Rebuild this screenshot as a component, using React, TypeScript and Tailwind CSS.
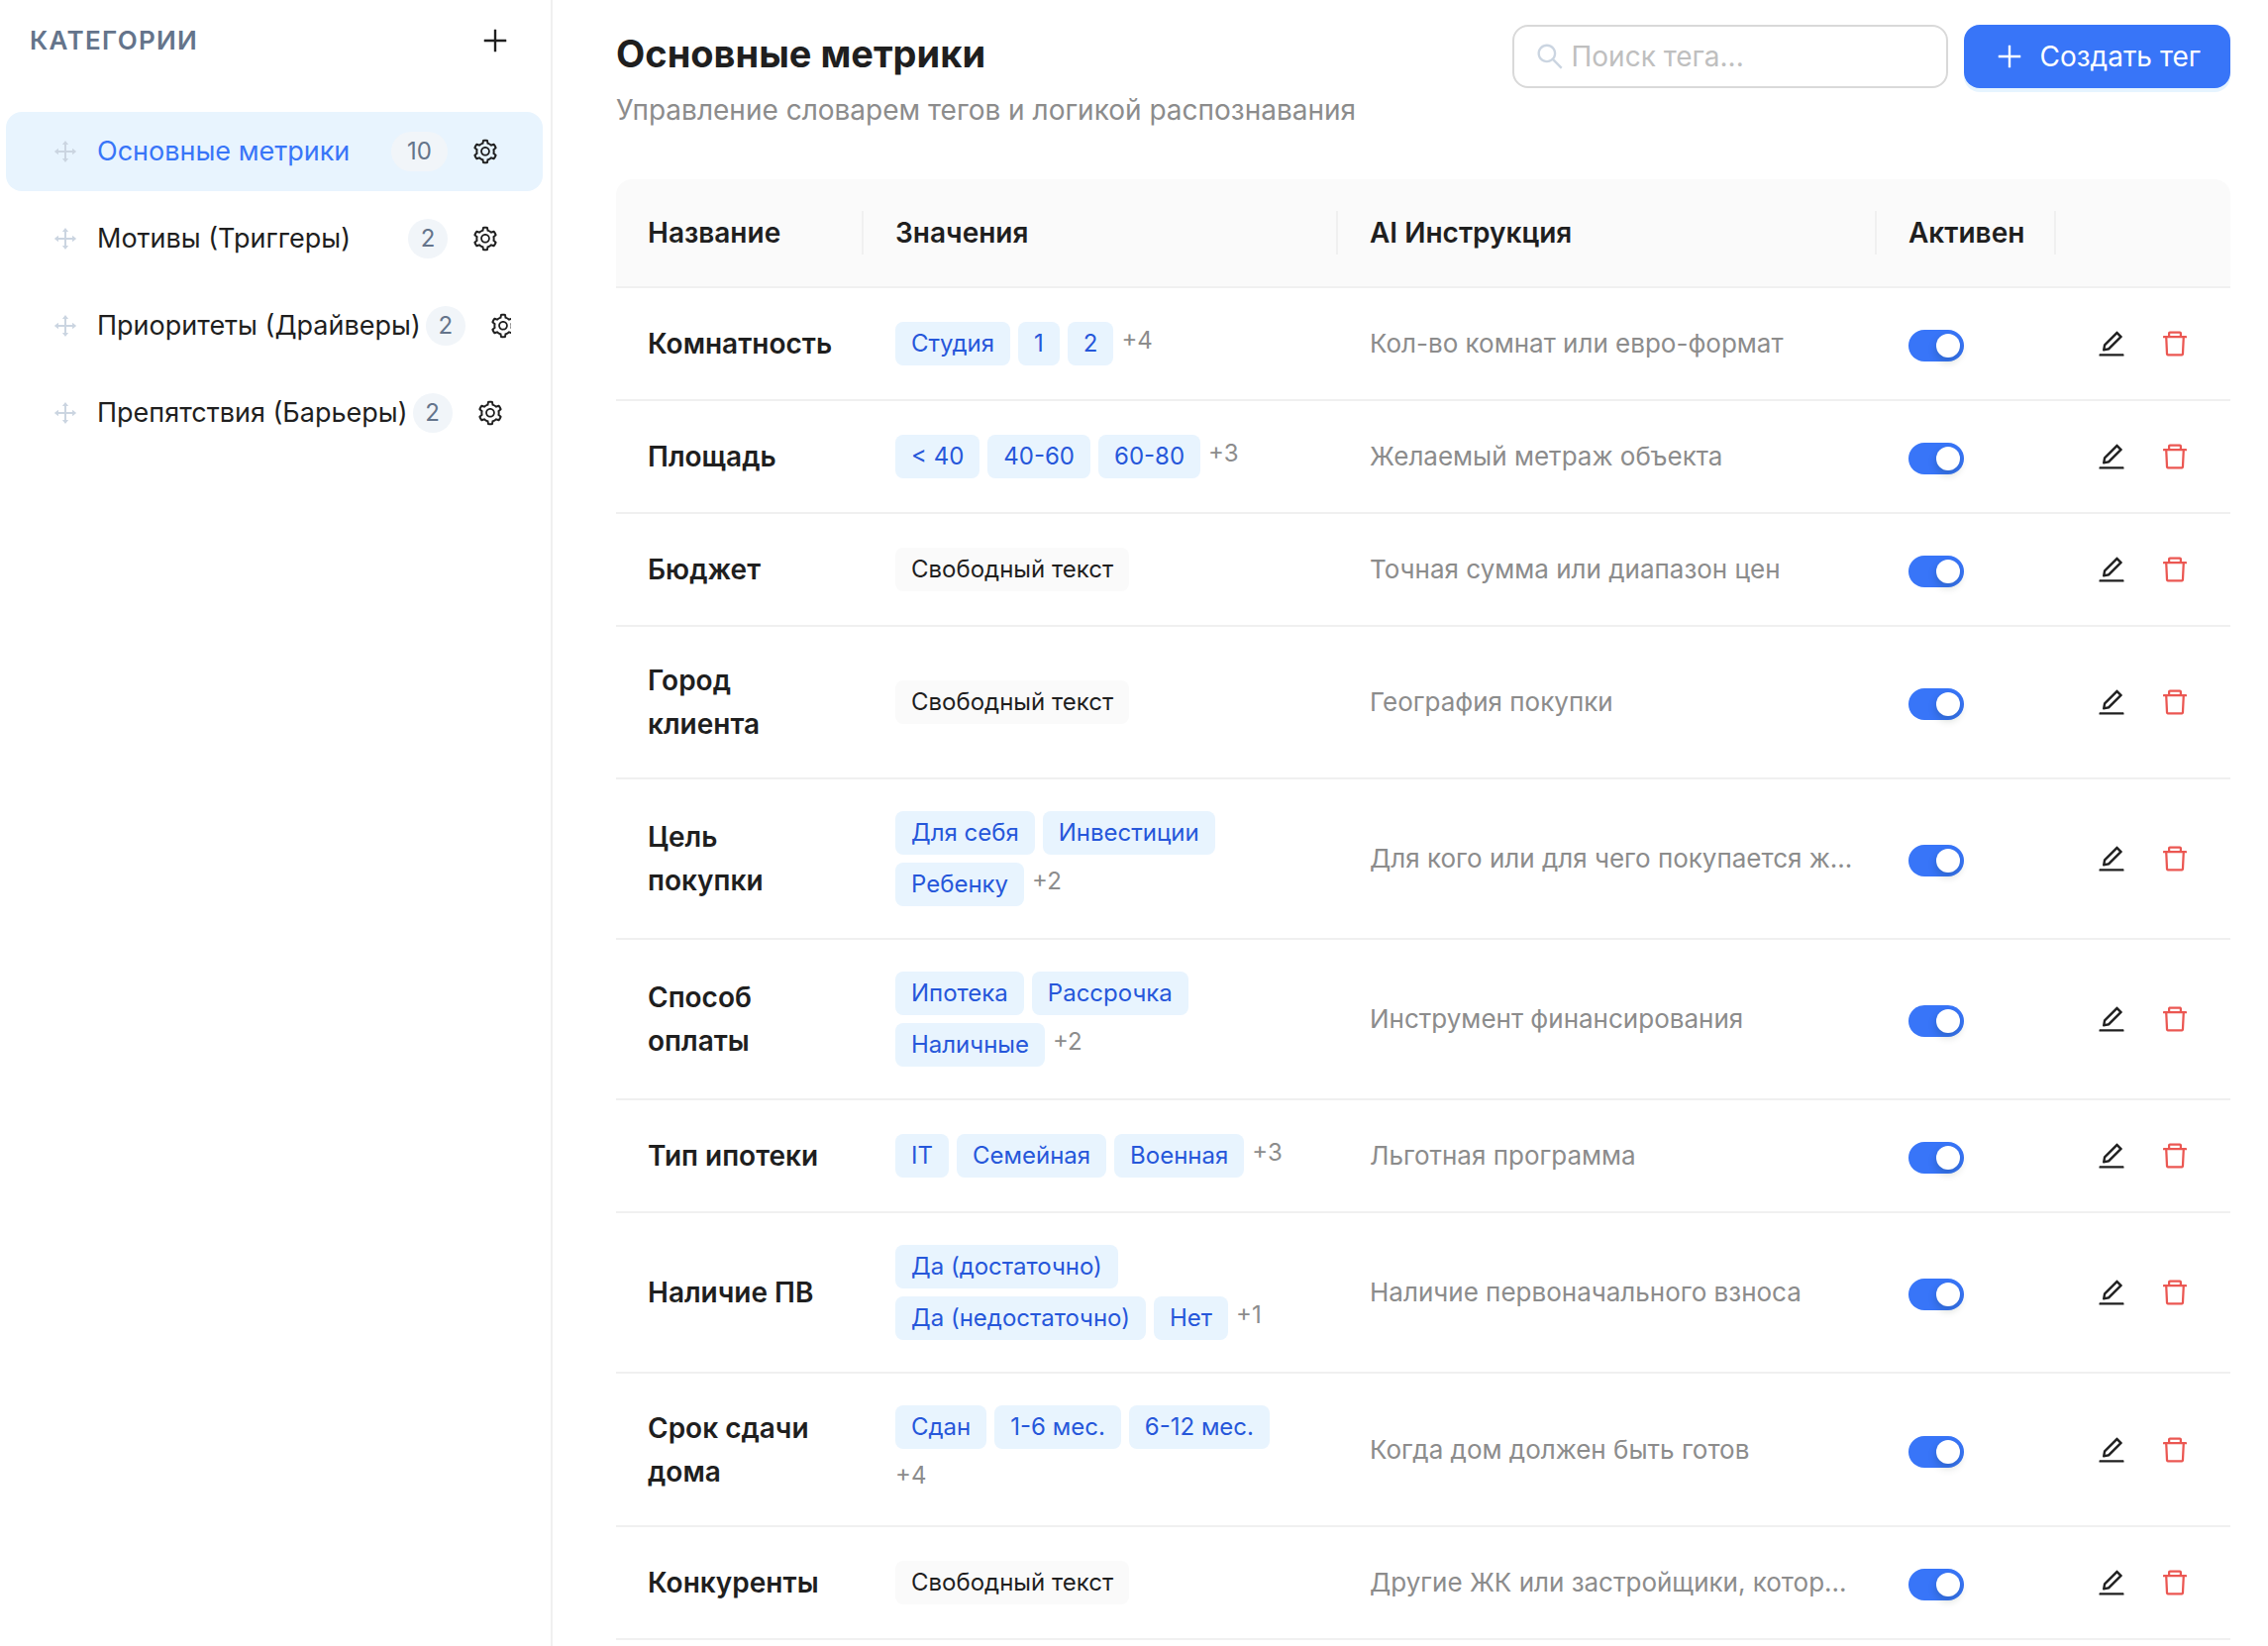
import { useState } from 'react';
import {
  AiOutlineDelete,
  AiOutlineDrag,
  AiOutlineEdit,
  AiOutlinePlus,
  AiOutlineSearch,
  AiOutlineSetting,
} from 'react-icons/ai';

interface Category {
  name: string;
  count: number;
}

interface Tag {
  name: string;
  values: string[];
  more?: number;
  instruction: string;
}

const categories: Category[] = [
  { name: 'Основные метрики', count: 10 },
  { name: 'Мотивы (Триггеры)', count: 2 },
  { name: 'Приоритеты (Драйверы)', count: 2 },
  { name: 'Препятствия (Барьеры)', count: 2 },
];

const tags: Tag[] = [
  { name: 'Комнатность', values: ['Студия', '1', '2'], more: 4, instruction: 'Кол-во комнат или евро-формат' },
  { name: 'Площадь', values: ['< 40', '40-60', '60-80'], more: 3, instruction: 'Желаемый метраж объекта' },
  { name: 'Бюджет', values: [], instruction: 'Точная сумма или диапазон цен' },
  { name: 'Город клиента', values: [], instruction: 'География покупки' },
  { name: 'Цель покупки', values: ['Для себя', 'Инвестиции', 'Ребенку'], more: 2, instruction: 'Для кого или для чего покупается ж...' },
  { name: 'Способ оплаты', values: ['Ипотека', 'Рассрочка', 'Наличные'], more: 2, instruction: 'Инструмент финансирования' },
  { name: 'Тип ипотеки', values: ['IT', 'Семейная', 'Военная'], more: 3, instruction: 'Льготная программа' },
  { name: 'Наличие ПВ', values: ['Да (достаточно)', 'Да (недостаточно)', 'Нет'], more: 1, instruction: 'Наличие первоначального взноса' },
  { name: 'Срок сдачи дома', values: ['Сдан', '1-6 мес.', '6-12 мес.'], more: 4, instruction: 'Когда дом должен быть готов' },
  { name: 'Конкуренты', values: [], instruction: 'Другие ЖК или застройщики, котор...' },
];

function Sidebar() {
  const [active, setActive] = useState(0);

  return (
    <aside className="w-[558px] shrink-0 border-r-2 border-[#f0f0f0]">
      <div className="flex items-center justify-between pl-[30px] pr-8 pt-[17px] mb-12">
        <h2 className="text-[26px] leading-[48px] font-semibold tracking-wider text-[#64748b]">КАТЕГОРИИ</h2>
        <button aria-label="Добавить категорию" className="w-12 h-12 flex items-center justify-center">
          <AiOutlinePlus size={32} />
        </button>
      </div>

      <ul className="flex flex-col gap-2 pl-[6px] pr-2">
        {categories.map((category, index) => (
          <li
            key={category.name}
            className={`h-20 rounded-2xl pl-[46px] pr-8 flex items-center ${index === active ? 'bg-[#e8f4fe]' : ''}`}
          >
            <AiOutlineDrag size={28} className="shrink-0 mr-[18px] text-[#cbd5e1]" />
            <div className="flex-1 min-w-0 flex items-center overflow-hidden">
              <button
                onClick={() => setActive(index)}
                className={`flex-1 pr-[5px] text-left text-[27px] whitespace-nowrap ${index === active ? 'text-[#3875f8]' : ''}`}
              >
                {category.name}
              </button>
              <span
                className={`h-10 min-w-10 shrink-0 rounded-full bg-[#f1f5f9] text-2xl leading-10 text-center text-[#64748b] ${category.count > 9 ? 'px-4' : ''}`}
              >
                {category.count}
              </span>
              <button aria-label="Настройки категории" className="ml-3 w-13 h-12 shrink-0 flex items-center justify-center">
                <AiOutlineSetting size={28} />
              </button>
            </div>
          </li>
        ))}
      </ul>
    </aside>
  );
}

function Switch({ label }: { label: string }) {
  const [checked, setChecked] = useState(true);

  return (
    <button
      role="switch"
      aria-checked={checked}
      aria-label={label}
      onClick={() => setChecked(!checked)}
      className={`mt-1 w-14 h-8 p-1 rounded-full flex ${checked ? 'justify-end bg-[#3875f8]' : 'bg-[#bfbfbf]'}`}
    >
      <span className="w-6 h-6 rounded-full bg-white shadow-[0_4px_8px_rgba(0,35,11,0.2)]" />
    </button>
  );
}

function TagRow({ tag }: { tag: Tag }) {
  return (
    <tr className="[&>td]:border-b-2 [&>td]:border-[#f0f0f0]">
      <td className="p-8 font-semibold">{tag.name}</td>
      <td className="p-8">
        <div className="flex flex-wrap gap-2 text-2xl leading-[44px]">
          {tag.values.map(value => (
            <span key={value} className="px-4 rounded-lg bg-[#e8f4fe] text-[#2657da]">
              {value}
            </span>
          ))}
          {tag.values.length === 0 && <span className="px-4 rounded-lg bg-[#fafafa]">Свободный текст</span>}
          {tag.more && <span className="leading-[37px] text-[#8c8c8c]">+{tag.more}</span>}
        </div>
      </td>
      <td className="py-8 pl-8 pr-5">
        <div className="truncate text-[26px] text-[#8c8c8c]">{tag.instruction}</div>
      </td>
      <td className="px-8">
        <Switch label={tag.name} />
      </td>
      <td className="p-8">
        <div className="flex gap-4">
          <button aria-label="Редактировать" className="w-12 h-12 flex items-center justify-center">
            <AiOutlineEdit size={32} />
          </button>
          <button aria-label="Удалить" className="w-12 h-12 flex items-center justify-center text-[#eb5752]">
            <AiOutlineDelete size={32} />
          </button>
        </div>
      </td>
    </tr>
  );
}

export default function App() {
  const [search, setSearch] = useState('');
  const rows = tags.filter(tag => tag.name.toLowerCase().includes(search.toLowerCase()));

  return (
    <div className="min-h-screen flex bg-white font-[Inter,sans-serif] text-[28px] leading-[44px] text-[#1f1f1f]">
      <Sidebar />

      <main className="flex-1 min-w-0 pl-16 pr-[38px] pt-[25px]">
        <header className="flex items-start justify-between mb-12">
          <div>
            <h1 className="text-[38px] leading-[58px] font-bold">Основные метрики</h1>
            <p className="mt-[6px] text-[#8c8c8c]">Управление словарем тегов и логикой распознавания</p>
          </div>
          <div className="flex gap-4">
            <label className="w-[440px] h-16 px-5 flex items-center gap-[6px] border-2 border-[#d9d9d9] rounded-2xl">
              <AiOutlineSearch size={32} className="shrink-0 text-[#cbd5e1]" />
              <input
                type="text"
                aria-label="Поиск тега"
                value={search}
                onChange={(e) => setSearch(e.target.value)}
                placeholder="Поиск тега..."
                className="flex-1 min-w-0 outline-none placeholder:text-[#bfbfbf]"
              />
            </label>
            <button className="h-16 px-[30px] flex items-center gap-[15px] rounded-2xl bg-[#3875f8] text-white shadow-[0_4px_0_rgba(5,145,255,0.1)]">
              <AiOutlinePlus size={32} />
              Создать тег
            </button>
          </div>
        </header>

        <table className="w-full table-fixed border-separate border-spacing-0 text-left">
          <colgroup>
            <col className="w-[250px]" />
            <col className="w-[479px]" />
            <col />
            <col className="w-[181px]" />
            <col className="w-[176px]" />
          </colgroup>
          <thead>
            <tr className="[&>th]:border-b-2 [&>th]:border-[#f0f0f0] [&>th]:bg-[#fafafa]">
              <th className="py-8 pl-8 font-semibold rounded-tl-2xl">
                <div className="border-r-2 border-[#f0f0f0]">Название</div>
              </th>
              <th className="py-8 pl-8 font-semibold">
                <div className="border-r-2 border-[#f0f0f0]">Значения</div>
              </th>
              <th className="py-8 pl-8 font-semibold">
                <div className="border-r-2 border-[#f0f0f0]">AI Инструкция</div>
              </th>
              <th className="py-8 pl-8 font-semibold">
                <div className="border-r-2 border-[#f0f0f0]">Активен</div>
              </th>
              <th className="rounded-tr-2xl" />
            </tr>
          </thead>
          <tbody>
            {rows.map(tag => (
              <TagRow key={tag.name} tag={tag} />
            ))}
          </tbody>
        </table>
      </main>
    </div>
  );
}
